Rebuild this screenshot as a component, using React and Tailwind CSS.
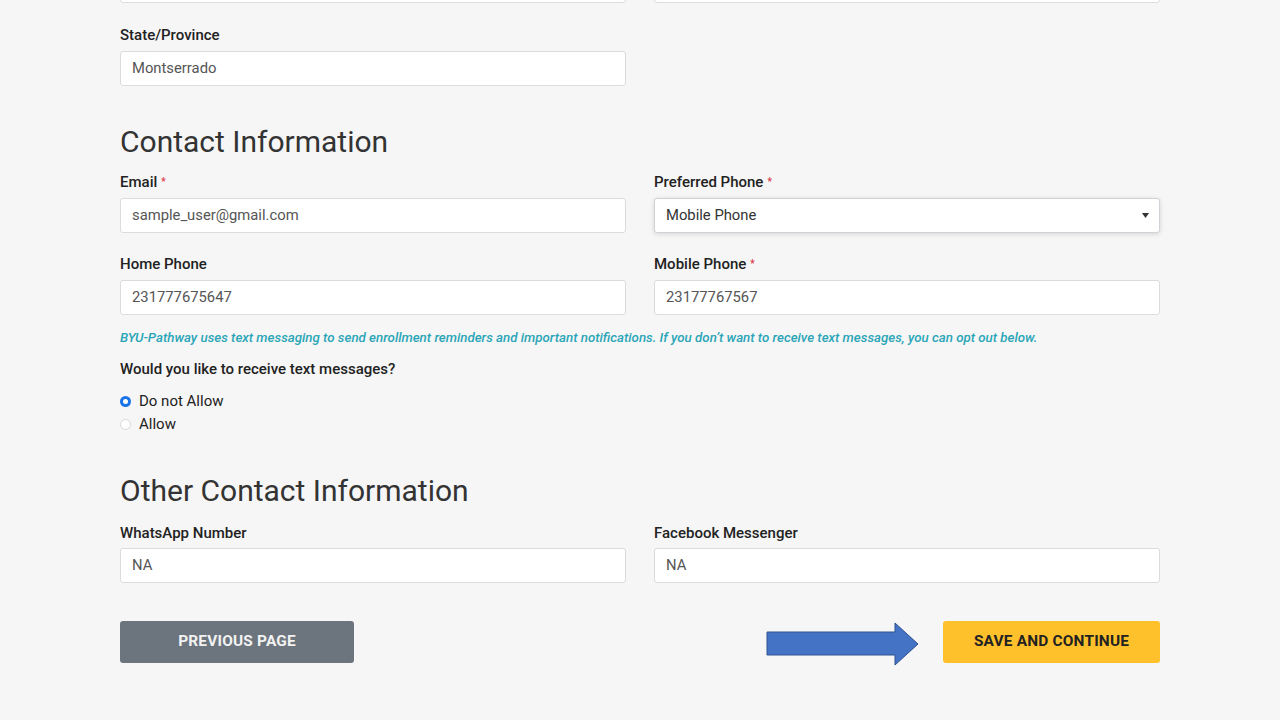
import React from 'react';

const Label = ({ children, required, className = '' }) => (
  <label className={`block text-[15px] leading-5 font-medium text-[#222] ${className}`}>
    {children}
    {required && <span className="ml-1 text-[10px] align-top text-[#dc3545]">*</span>}
  </label>
);

const Input = ({ value, className = '' }) => (
  <div
    className={`h-[35px] flex items-center px-[11px] bg-white border border-[#dcdcdc] rounded-[3px] text-[14.8px] text-[#555] ${className}`}
  >
    {value}
  </div>
);

function Radio({ checked, label }) {
  return (
    <div className="flex items-center h-[23px]">
      {checked ? (
        <span className="w-[11px] h-[11px] rounded-full bg-[#1a73e8] flex items-center justify-center">
          <span className="w-[5px] h-[5px] rounded-full bg-white" />
        </span>
      ) : (
        <span className="w-[11px] h-[11px] rounded-full border border-[#d8d8d8] bg-white" />
      )}
      <span className="ml-2 text-[15px] text-[#222]">{label}</span>
    </div>
  );
}

export default function App() {
  return (
    <div className="min-h-screen bg-[#f6f6f6] overflow-hidden" style={{ fontFamily: 'Roboto, "Liberation Sans", sans-serif' }}>
      <div className="w-[1040px] mx-auto pb-16">
        {/* tail of the previous row */}
        <div className="grid grid-cols-2 gap-[28px] -mt-[32px]">
          <Input value="" />
          <Input value="" />
        </div>

        <div className="mt-[22px] w-[506px]">
          <Label>State/Province</Label>
          <Input value="Montserrado" className="mt-[6px]" />
        </div>

        <h2 className="mt-[38px] text-[30px] leading-9 font-normal text-[#333]">Contact Information</h2>

        <div className="mt-[12px] grid grid-cols-2 gap-x-[28px]">
          <div>
            <Label required>Email</Label>
            <Input value="sample_user@gmail.com" className="mt-[6px]" />
          </div>
          <div>
            <Label required>Preferred Phone</Label>
            <div className="mt-[6px] h-[35px] flex items-center justify-between px-[11px] bg-white border border-[#cfd3d8] rounded-[3px] text-[14.8px] text-[#333] shadow-[0_1px_5px_rgba(0,0,0,0.14)]">
              <span>Mobile Phone</span>
              <svg width="7" height="5" viewBox="0 0 7 5" className="mr-[-1px]">
                <path d="M0 0h7L3.5 5z" fill="#333" />
              </svg>
            </div>
          </div>
          <div className="mt-[21px]">
            <Label>Home Phone</Label>
            <Input value="231777675647" className="mt-[6px]" />
          </div>
          <div className="mt-[21px]">
            <Label required>Mobile Phone</Label>
            <Input value="23177767567" className="mt-[6px]" />
          </div>
        </div>

        <p className="mt-[14px] text-[13.3px] leading-[18px] italic font-medium text-[#2aa5b7]">
          BYU-Pathway uses text messaging to send enrollment reminders and important notifications. If you don’t want to receive text messages, you can opt out below.
        </p>

        <Label className="mt-[12px]">Would you like to receive text messages?</Label>

        <div className="mt-[11px] pl-0">
          <Radio checked label="Do not Allow" />
          <Radio label="Allow" />
        </div>

        <h2 className="mt-[37px] text-[30px] leading-9 font-normal text-[#333]">Other Contact Information</h2>

        <div className="mt-[14px] grid grid-cols-2 gap-x-[28px]">
          <div>
            <Label>WhatsApp Number</Label>
            <Input value="NA" className="mt-[5px]" />
          </div>
          <div>
            <Label>Facebook Messenger</Label>
            <Input value="NA" className="mt-[5px]" />
          </div>
        </div>

        <div className="mt-[33px] flex items-center justify-between">
          <button className="w-[234px] h-[42px] rounded-[3px] bg-[#6c757d] text-[#f2f2f2] text-[15.4px] font-bold tracking-[0.2px]">
            PREVIOUS PAGE
          </button>
          <div className="flex items-center gap-[23px]">
            <svg width="154" height="45" viewBox="0 0 154 45" className="mt-[6px]">
              <polygon
                points="1,10 129,10 129,1 152,22 129,43 129,33 1,33"
                fill="#4472c4"
                stroke="#2f528f"
                strokeWidth="1"
              />
            </svg>
            <button className="w-[217px] h-[42px] rounded-[3px] bg-[#ffc12b] text-[#222] text-[15.4px] font-bold tracking-[0.2px]">
              SAVE AND CONTINUE
            </button>
          </div>
        </div>
      </div>
    </div>
  );
}
